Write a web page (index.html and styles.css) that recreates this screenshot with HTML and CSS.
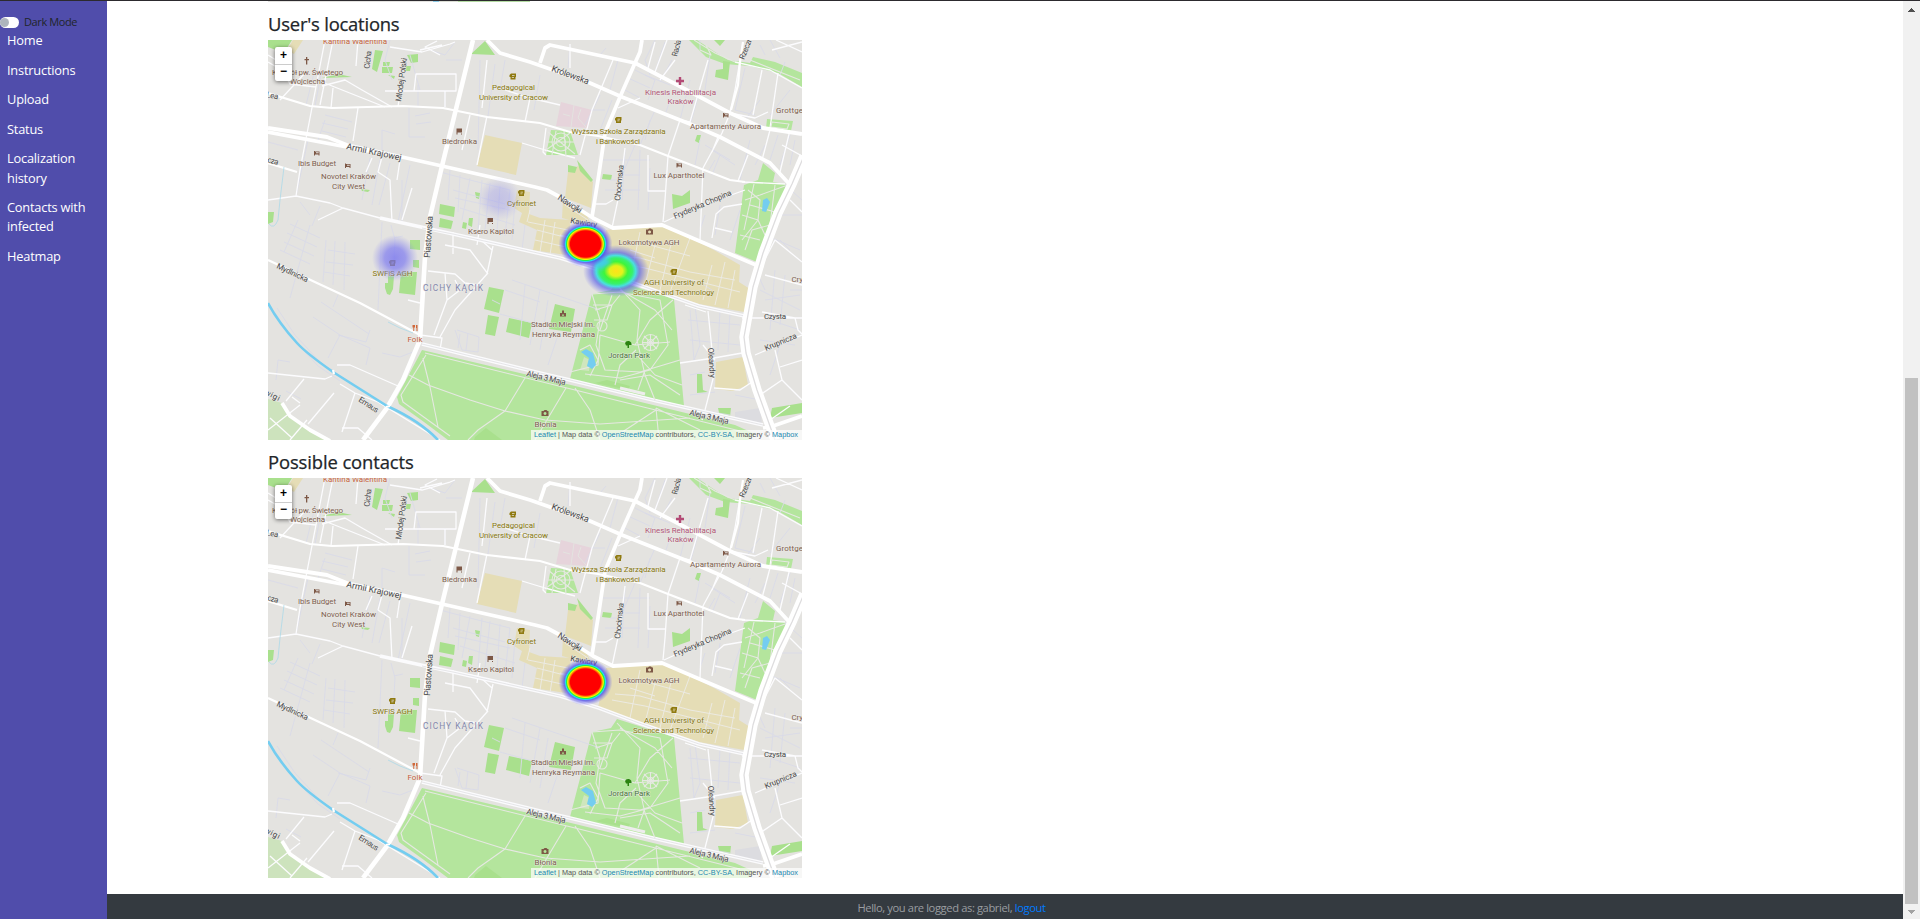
FILE: index.html
```html
<!DOCTYPE html>
<html lang="en">
<head>
<meta charset="utf-8">
<title>Heatmap</title>
<link rel="stylesheet" href="styles.css">
</head>
<body>
<div class="app">
  <nav class="sidebar">
    <div class="switch"><span class="track"><span class="knob"></span></span><span class="switch-label">Dark Mode</span></div>
    <a>Home</a>
    <a>Instructions</a>
    <a>Upload</a>
    <a>Status</a>
    <a>Localization<br>history</a>
    <a>Contacts with<br>infected</a>
    <a>Heatmap</a>
  </nav>
  <div class="page">
    <main class="content">
      <div class="previous-map"></div>
      <h2 class="title">User's locations</h2>
      <div class="map">
        <svg class="tiles" viewBox="268 40 534 400"></svg>
        <svg class="heat" viewBox="268 40 534 400">
          <ellipse cx="499.500" cy="199" rx="22" ry="22" fill="url(#faint)" opacity=".38"/>
          <ellipse cx="395" cy="258" rx="23" ry="23" fill="url(#faint)"/>
          <ellipse cx="616" cy="271" rx="33" ry="26" fill="url(#mid)"/>
          <path d="M593 262L604 257L612 262L600 270Z" fill="#42cbe8" class="bridge"/>
          <ellipse cx="585.500" cy="244" rx="27" ry="23.500" fill="url(#hot)"/>
        </svg>
        <div class="zoom"><span>+</span><span>−</span></div>
        <div class="credit"><a>Leaflet</a> | Map data © <a>OpenStreetMap</a> contributors, <a>CC-BY-SA</a>, Imagery © <a>Mapbox</a></div>
      </div>
      <h2 class="title title-wide">Possible contacts</h2>
      <div class="map">
        <svg class="tiles" viewBox="268 40 534 400"></svg>
        <svg class="heat" viewBox="268 40 534 400">
          <ellipse cx="585.500" cy="244" rx="27" ry="23.500" fill="url(#hot)"/>
        </svg>
        <div class="zoom"><span>+</span><span>−</span></div>
        <div class="credit"><a>Leaflet</a> | Map data © <a>OpenStreetMap</a> contributors, <a>CC-BY-SA</a>, Imagery © <a>Mapbox</a></div>
      </div>
    </main>
    <footer class="footer"><span class="who">Hello, you are logged as: gabriel, <a>logout</a></span></footer>
  </div>
  <div class="scrollbar">
    <svg class="arrow" width="7" height="4" viewBox="0 0 7 4"><path d="M0 4V3H1V2H2V1H3V0H4V1H5V2H6V3H7V4Z" fill="#505050"/></svg>
    <div class="thumb"></div>
    <svg class="arrow" width="7" height="4" viewBox="0 0 7 4"><path d="M0 0V1H1V2H2V3H3V4H4V3H5V2H6V1H7V0Z" fill="#a3a3a3"/></svg>
  </div>
</div>
<svg class="defs" width="0" height="0">
  <defs>
    <radialGradient id="faint"><stop offset="0" stop-color="#7370f0" stop-opacity=".76"/><stop offset=".45" stop-color="#7d7af0" stop-opacity=".7"/><stop offset="1" stop-color="#8a88f0" stop-opacity="0"/></radialGradient>
    <radialGradient id="mid"><stop offset="0" stop-color="#ffe11a"/><stop offset=".2" stop-color="#e2f31c"/><stop offset=".36" stop-color="#3ef53a"/><stop offset=".5" stop-color="#38f070"/><stop offset=".6" stop-color="#42dfe0" stop-opacity=".95"/><stop offset=".72" stop-color="#5b63e8" stop-opacity=".7"/><stop offset="1" stop-color="#6a66f0" stop-opacity="0"/></radialGradient>
    <radialGradient id="hot"><stop offset="0" stop-color="#f00"/><stop offset=".56" stop-color="#f00"/><stop offset=".62" stop-color="#ff9a00"/><stop offset=".66" stop-color="#f4f800"/><stop offset=".7" stop-color="#1cf53c"/><stop offset=".74" stop-color="#22dff5"/><stop offset=".79" stop-color="#4b47ec" stop-opacity=".75"/><stop offset="1" stop-color="#6a66f0" stop-opacity="0"/></radialGradient>
  </defs>
</svg>
<template id="city">
  <svg>
  <rect x="268" y="40" width="534" height="400" fill="#e4e3e0"/>
  <g fill="#e5ddb6">
    <path d="M293 40H303L294 54L287 50ZM485 135L522 143L516 175L477 166ZM517 190L530 192L529 214L540 218L571 220L566 255L533 250L537 230L519 222L522 213L514 208ZM568 172L578 166L593 182L591 208L565 198ZM563 199L586 214L592 226L562 218ZM606 230L664 225L714 250L740 265L739 282L750 289L744 312L699 304L639 284L598 270ZM716 362L743 357L748 385L733 391L715 389Z"/>
  </g>
  <path d="M561 102L592 110L588 128L556 126Z" fill="#e6d4db"/>
  <path d="M574 105L571 127M581 109L578 118L586 127M570 116L563 114" stroke="#e4e3e0" stroke-width="1" fill="none"/>
  <path d="M268 399L282 403L290 416L310 430L328 440H268Z" fill="#cde3bd"/>
  <g fill="#b4e59d">
    <path d="M592 294L611 290L617 281L674 299L684 406L570 379ZM422 350L571 385L735 425L755 434L748 440H448L424 422L399 404L397 397ZM763 163L775 173L773 182L785 184L786 190L770 225L757 262L735 253L744 185L758 180ZM551 130L570 131L578 155L546 155ZM689 40H697L715 52L728 60L750 63L753 57L775 62L802 73V87L778 73L750 66L725 64L706 57ZM767 119L793 121L791 131L766 128Z"/>
  </g>
  <g fill="#a9e08d">
    <path d="M268 40H292L284 53L268 47ZM375 50L383 51L377 72L372 69ZM407 55L418 54V62L411 63ZM383 62H390L389 66H383ZM382 67H393L392 73H382ZM388 75L395 76L394 79ZM406 66H411L410 71H405ZM322 78L352 77L338 74ZM471 54L485 41L495 55ZM440 204L455 207L454 217L439 214ZM440 218L453 221L451 229L439 227ZM475 192L480 193L479 199L476 198ZM469 218H473L472 227L468 225ZM463 222L467 223L466 229L462 228ZM410 240H420V250L410 249ZM413 260H419V268L413 267ZM401 272H417L415 295L399 293ZM388 276H394L393 289L390 295L387 294L385 288V283H388ZM489 287L504 290L499 313L484 309ZM488 315L499 317L495 336L485 334ZM509 318L532 323L529 338L506 332ZM555 304L575 309L571 332L549 329ZM268 212H274L273 222L268 224ZM361 189L370 190L368 192L362 191ZM568 165L577 167L575 173L568 172ZM577 160L593 180L591 182L580 171ZM603 174L612 175L611 180L602 179ZM672 194L682 196L690 190V203L673 209ZM697 135H701L699 143L695 141ZM714 40H725L720 46ZM716 70L723 69V61L730 62L728 80L715 77ZM772 408L802 403V413L770 418ZM697 374H702L703 390L708 392L697 393ZM718 408H731L730 417H720ZM595 383L607 380L630 386L628 390ZM475 437L486 428L502 440H474Z"/>
  </g>
  <path d="M580 370L584 357L590 360L589 371Z" fill="#cfe6bd"/>
  <path d="M735 412L760 408L762 424L735 418Z" fill="#dcdce0"/>
  <g class="path">
    <path d="M314 73L306 105M321 74L315 106M268 142L298 150M308 140L296 196M325 115L352 122M322 123L348 129M322 131L346 137M325 120L318 140M409 108V137H425M415 116L430 113M416 124L431 122M480 60L478 150M495 64L488 116M505 60L500 90M418 85V107M445 90V107M390 40L385 60L392 80M410 55L420 90M430 50L445 55L455 42M446 60H462M370 158L362 200M380 160L372 205M390 163L379 205M402 180V222M410 165L398 222M382 150V130L395 134"/>
    <path d="M290 224L320 238M287 233L317 247M284 242L314 256M280 250L310 264M298 220L284 252M310 225L290 298M326 240L323 282M335 241L333 285M345 242L344 290M328 250L355 254M326 262L353 265M324 272L350 276M391 225L395 240L393 275M394 238L403 236M300 202L310 215M320 206L312 226M382 222L378 310"/>
    <path d="M338 295L333 307M321 302L369 334M313 317L340 335L370 348L366 365M340 335L328 358M370 330L366 342L338 335M382 353L400 357L418 350M277 308L295 335L320 362L338 374M274 311L292 338L318 366L340 381M276 380L278 360L290 362M301 399L286 391M455 330L462 350L478 352L479 337L457 330M460 334L458 348M468 333L466 350M492 300L500 304M500 314L540 325M505 290L540 302M525 285L520 340M540 290L530 345M548 300L540 350M558 335L548 365M512 280L600 310"/>
    <path d="M440 172L470 180L510 190M450 170L448 200M460 175L458 212M470 178L462 220M482 180L478 230M490 183L485 230M500 186L497 232M510 190L505 236M453 190L505 204M455 198L510 210M460 208L515 225M440 170L436 200M515 200L512 240M525 225L522 250"/>
    <path d="M540 75L534 110M570 45L568 68M606 48L600 55M618 60L610 90M655 40L645 60L650 75M665 42L655 72M672 60L660 82M635 70L655 80L648 100M628 78L650 88M625 90L640 98M645 75L670 85M600 95L585 125M590 110H605M612 100L600 130M650 120L645 140M655 110L640 145M690 80L680 120M700 90L690 125M670 100L665 115M700 140L695 165M705 145L730 160M712 150L735 165M715 160L708 172M720 155L712 175M650 168L648 210M635 145L620 180H610M625 150L622 200M640 150L638 210M600 160H650M605 190H640M625 175H640"/>
    <path d="M704 285L712 290M690 310L694 360M695 306L700 345L694 360M720 310L718 350M730 312L728 352M688 320L740 325M690 340L740 345M760 290L800 310M765 300L800 295M775 270L770 330M785 275L780 325M790 290H802M770 320L800 330M760 340L795 345M780 345L770 375M690 375L705 372M690 395L715 392M735 395L760 400M700 410L730 415M758 275L765 290"/>
    <path d="M700 40V50M710 55L705 90M745 68L735 110M760 45L765 55M770 40L780 58M785 62L780 75M790 90L770 115M735 110L755 115M745 120L760 100M778 135L770 160M790 135L780 165M750 140L740 180M765 145L755 165M795 140L790 165M780 240L790 250M775 215H802M765 235L800 250M785 185L802 200M705 215L700 230M720 205L715 235M740 210L730 240"/>
  </g>
  <g class="campus">
    <path d="M530 210L527 222M545 220L540 252M555 222L550 255M537 230L568 238M535 240L566 247M528 222L568 230M640 232L630 280M655 245L645 285M672 240L660 290M690 238L670 292M712 265L703 300M725 262L715 305M735 270L728 308M615 256L640 258L690 272L735 280M612 262L645 268L740 292M650 245L690 256M630 250L655 258M565 205L588 220M560 235L572 238"/>
  </g>
  <g class="minor">
    <path d="M268 55L276 60M268 62L282 70L290 84L316 87M325 40L300 170L296 196M333 40L320 105M358 40L356 66M305 73L280 100M322 86L345 80L362 90L392 107M322 82L385 107M385 91L456 91V74H416L414 91M400 92L398 107M440 55L425 47L437 41M420 50L442 45M390 47L422 52L450 44L455 42M333 88L331 108M358 108L353 141M445 91V107M400 160L397 180M470 115L462 150M487 116L477 165M482 108L487 60M525 122L530 98L560 105M530 98L505 90M522 143L545 150L575 158M546 155L543 152L546 128M268 200L296 196L330 203L343 208L380 218M343 208L318 220M382 157L378 172L390 180L392 222M412 188L402 220M372 158L366 172"/>
    <path d="M570 44L570 68M613 60L592 110L580 155M655 42L648 68M640 98L618 108M667 40L655 72M675 60L660 80M708 60L690 122L680 120L668 156M740 60L735 90L730 112M735 62L770 70L802 88M762 70L753 115M778 73L770 128M730 113L722 133L703 168M718 137L712 152M748 155L738 181M770 130L762 160M790 130L780 172M782 145L802 156M800 165L785 205M790 200L802 212M742 182L785 184M668 156L665 200L663 222M648 155V191H666M625 148L620 190L612 228M596 204L606 204L613 200M664 222L690 210L745 190M712 238L716 214L724 207L742 204M715 228L732 232M703 168L700 240M730 113L755 118L768 112M772 50L802 42M776 40L802 52"/>
    <path d="M445 245L470 250L488 274M453 232V254M453 234L480 239L492 250M493 246L487 274L455 310L440 337M428 271L455 274L465 283L478 285M445 273L447 300L434 335M447 300L460 290L455 280M420 335L442 338L440 350M268 373L325 379L332 376M337 365L350 365L398 386M304 379L286 401M334 393L308 424M355 393L342 432M342 428H358L372 440M292 397L300 403M340 384L355 393L378 402L440 440M307 420L290 440M268 430L300 405M270 418L292 438M480 225L477 245M408 300L420 303"/>
    <path d="M708 311L712 350L714 375L705 410L702 420M680 363L714 358L742 353M714 388L740 390L752 382M742 318H802M762 312L795 318L798 330L802 334M755 355L790 340L802 335M775 350L782 380L802 400M780 367L802 360M757 397L782 380M685 305L706 312M765 275L802 285M762 265L775 240L802 262M770 420L790 406M715 360L703 345"/>
  </g>
  <g class="double">
    <path d="M422 344L540 373L570 380L657 401L763 425"/><path d="M380 218L453 234L560 258L599 270L639 285L699 306L749 317"/>
  </g>
  <path class="double-mid" d="M422 344L540 373L570 380L657 401L763 425M422 228L453 234L560 258L599 270L639 285L699 306L749 317"/>
  <g class="trail">
    <path d="M425 353L571 389L740 431M426 355L401 395L403 402L450 436M423 358L424 363L430 387L438 427M409 375L428 385L470 400L505 411L545 420M525 378L505 411L478 430L468 440M575 388L590 410L600 440M566 388L535 440M656 408L659 440M545 420L600 424L690 418M656 410L610 440M656 408L700 430"/>
    <path d="M592 294L620 292L660 300L668 345L650 370L620 378L585 374M617 285L640 310L637 340L645 375L655 400M595 310L612 305L620 295M673 300L650 320L635 345L600 335M600 335L598 365L570 372M592 294L600 320L596 345L605 370L640 372L680 360M612 295L600 330M635 345L670 342M636 350L620 365L615 385M637 355L655 375L682 385M580 350L590 345L598 360L590 376M620 380L650 375L680 395M645 370L638 390M593 305H612L607 320H594M620 290L655 310L672 330"/>
    <circle cx="650.500" cy="342.500" r="8"/><circle cx="650.500" cy="342.500" r="3"/><path d="M642 342.500H659M650.500 334V351M644 336L657 349M657 336L644 349"/><circle cx="602" cy="326" r="5"/>
    <path d="M548 132L575 154M546 150L570 133M556 131L552 155M564 131L566 156M546 142H574"/><circle cx="561" cy="142" r="9"/><circle cx="561" cy="142" r="4.500"/>
    <path d="M748 190L760 200L758 220L742 240M785 186L760 195L745 200M775 185L770 225L752 230L745 250M742 215L758 220L765 235M740 235L760 240M754 184L744 230M750 205L775 212M706 45L711 55L700 50M694 40L715 53L735 62M750 60L800 80"/>
    <path d="M772 122L789 124L787 129L771 127Z"/>
  </g>
  <path d="M620 388L645 394" stroke="#eeeded" stroke-width="3" fill="none"/>
  <g class="road">
    <path d="M268 93L310 106L332 108L403 106L443 108L487 117L540 123L570 132L598 136L640 145L668 156L730 180L745 182"/>
    <path d="M268 260L317 283L360 303L420 335"/>
    <path d="M268 163L297 172"/>
    <path d="M743 42L740 62L738 85L731 110"/>
  </g>
  <g class="main">
    <path d="M487 40L500 53L530 62L590 83L622 97L690 124L720 137L770 163L792 187"/>
    <path d="M540 63L545 48L550 45L635 63L683 88L730 113L763 128L802 134"/>
    <path d="M642 40L640 52L635 63L620 97L605 133L598 180L592 217"/>
    <path d="M268 128L327 137L347 145L402 157L442 166L535 187L547 190L560 197L593 218L613 228L662 225L697 240L763 268"/>
    <path d="M268 132L347 147L380 153"/>
    <path d="M282 403L290 416L310 430L330 441"/>
    <path d="M763 428L773 426L802 416"/>
  </g>
  <path class="avenue" d="M473 40L442 166L430 217L425 257L420 340L403 380L387 408L363 440"/>
  <path class="alley" d="M804 156L792 184L778 213L763 253L753 287L744 337L746 353L757 390L775 440"/>
  <path class="alley-mid" d="M804 156L792 184L778 213L763 253L753 287L744 337L746 353L757 390L775 440"/>
  <path class="river" d="M268 303Q278 322 297 343Q306 353 333 372L387 406Q420 421 438 440"/>
  <path d="M581 352L586 349L593 353L596 365L592 369L587 366L589 358L585 355ZM763 200L767 198L770 202L766 212L762 211Z" fill="#74cdf0"/>
  <path d="M284 167L280 200L278 220Q274 230 269 224M388 322L400 328L413 333" fill="none" stroke="#acd9e8" stroke-width=".8"/>
  <path d="M333 370L334 374M386 407L390 406" stroke="#fff" stroke-width="2.200"/>

  <g class="icons">
    <g fill="#8f7a10">
      <path id="cap" fill-rule="evenodd" d="M509.500 75L511 73.500H516V77H515.500V79.500H510.500V77H509.500ZM512 75.200V75.900H514.500V75.200ZM511.800 77V77.700H514V77Z"/>
      <use href="#cap" x="105.500" y="43.500"/><use href="#cap" x="8.500" y="116.500"/><use href="#cap" x="-120.500" y="186.500"/><use href="#cap" x="161" y="195.500"/>
    </g>
    <g fill="#7d5846">
      <path d="M306 57H307.300V59H309V60.200H307.300V64.500H306V60.200H304.500V59H306Z"/>
      <path id="cart" d="M456.500 128.500H462V132.500H457.500V134.500H456.500ZM461 133.500H462V134.500H461Z"/><use href="#cart" x="31" y="89.500"/>
      <path id="bed" fill-rule="evenodd" d="M314 151H315V151.500H319.500V155.500H318.500V154.500H315V155.500H314ZM316 152.300V153.300H318.700V152.300Z"/><use href="#bed" x="31" y="12.500"/><use href="#bed" x="409" y="-38"/><use href="#bed" x="362.500" y="12"/>
      <path id="cam" fill-rule="evenodd" d="M646 229.500H648L649 228.500H651L652 229.500H653V234.500H646ZM649.500 230.500A1.500 1.500 0 1 0 649.600 230.500Z"/><use href="#cam" x="-104.500" y="181.500"/>
      <path fill-rule="evenodd" d="M560 313H562V310.500H564V313H566V316.500H560ZM562 314.500V315.700H564V314.500Z"/>
    </g>
    <path d="M678.800 77H681.200V79.800H684V82.200H681.200V85H678.800V82.200H676V79.800H678.800Z" fill="#b34a75"/>
    <path d="M412.500 325V327.500H413.300V331H414.200V327.500H415V325M416 325H417.500V331H416.500V328H416Z" fill="#d0683a"/>
    <path d="M625 343Q626 340.500 629 341Q632 342 631.500 345H629V348H627.500V345.500H626Z" fill="#2b8310"/>
  </g>
  <g class="labels">
    <g fill="#c4623c"><text x="323" y="43.500" textLength="64">Kantina Walentina</text><text x="407.500" y="342" textLength="15">Folk</text></g>
    <g fill="#7d6050">
      <text x="272" y="74.500" textLength="71">Kościół pw. Świętego</text><text x="290" y="84" textLength="35">Wojciecha</text>
      <text x="442" y="144" textLength="35">Biedronka</text><text x="298" y="166" textLength="38">Ibis Budget</text>
      <text x="321" y="179" textLength="55">Novotel Kraków</text><text x="332" y="188.500" textLength="33">City West</text>
      <text x="468" y="234" textLength="46">Ksero Kapitol</text>
      <text x="690" y="128.500" textLength="71">Apartamenty Aurora</text><text x="776" y="113" textLength="34">Grottgera</text>
      <text x="653.500" y="178" textLength="51">Lux Aparthotel</text><text x="618.500" y="244.500" textLength="61">Lokomotywa AGH</text>
      <text x="531" y="327" textLength="64">Stadion Miejski im.</text><text x="532" y="336.500" textLength="63">Henryka Reymana</text>
      <text x="534.500" y="426.500" textLength="22">Błonia</text><text x="791.500" y="281.500" textLength="24">Crystal</text>
    </g>
    <g fill="#87770f">
      <text x="492" y="90" textLength="43">Pedagogical</text><text x="479" y="99.500" textLength="69">University of Cracow</text>
      <text x="571.500" y="134" textLength="94">Wyższa Szkoła Zarządzania</text><text x="596" y="143.500" textLength="44">i Bankowości</text>
      <text x="507" y="206" textLength="29">Cyfronet</text><text x="372.500" y="276" textLength="40">SWFiS AGH</text>
      <text x="644" y="285" textLength="60">AGH University of</text><text x="633" y="294.500" textLength="81">Science and Technology</text>
    </g>
    <g fill="#b05678"><text x="645" y="94.500" textLength="71">Kinesis Rehabilitacja</text><text x="667.500" y="104" textLength="26">Kraków</text></g>
    <text x="608" y="358" textLength="42" fill="#4a743c">Jordan Park</text>
    <text x="423" y="291" textLength="60" fill="#8488ae" class="district">CICHY KĄCIK</text>
    <g fill="#48484a">
      <text transform="translate(369.500 69) rotate(-84)" textLength="18">Cicha</text>
      <text transform="translate(401 102) rotate(-82)" textLength="44">Młodej Polski</text>
      <text transform="translate(266 97) rotate(12)" textLength="12">Lea</text>
      <text class="street" transform="translate(346 149) rotate(12)" textLength="56">Armii Krajowej</text>
      <text transform="translate(267 162) rotate(16)" textLength="11">cza</text>
      <text class="street" transform="translate(551 71) rotate(20)" textLength="39">Królewska</text>
      <text transform="translate(677 57) rotate(-76)" textLength="34">Racławicka</text>
      <text transform="translate(744 60) rotate(-68)" textLength="27">Rzeczna</text>
      <text transform="translate(620 201) rotate(-84)" textLength="36">Chocimska</text>
      <text class="street" transform="translate(557 199) rotate(33)" textLength="27">Nawojki</text>
      <text transform="translate(570 223) rotate(10)" textLength="27">Kawiory</text>
      <text transform="translate(675 219) rotate(-23)" textLength="62">Fryderyka Chopina</text>
      <text class="street" transform="translate(430 258) rotate(-86)" textLength="42">Piastowska</text>
      <text transform="translate(276 268) rotate(25)" textLength="34">Mydlnicka</text>
      <text transform="translate(358 401) rotate(33)" textLength="22">Emaus</text>
      <text transform="translate(264 394) rotate(26)" textLength="16">wigi</text>
      <text transform="translate(526 376) rotate(13)" textLength="40">Aleja 3 Maja</text>
      <text transform="translate(689 415) rotate(13)" textLength="40">Aleja 3 Maja</text>
      <text x="764" y="319" textLength="22">Czysta</text>
      <text transform="translate(766 351) rotate(-23)" textLength="34">Krupnicza</text>
      <text transform="translate(708 348) rotate(86)" textLength="30">Oleandry</text>
    </g>
  </g>
  </svg>
</template>
<script src="map.js"></script>
</body>
</html>
```
FILE: styles.css
```css
* { box-sizing: border-box; }
body { margin: 0; overflow: hidden; font-family: "Open Sans", "Noto Sans", sans-serif; color: #212529; background: #fff; }
.app { display: flex; height: 919px; border-top: 1px solid #2c2a2e; }
.sidebar { width: 107px; background: #504dab; padding-top: 11px; flex: none; }
.switch { display: flex; align-items: center; height: 20px; gap: 5px; font-size: 11px; }
.track { width: 19px; height: 11px; border-radius: 6px; background: #fff; display: flex; align-items: center; }
.knob { width: 9px; height: 9px; border-radius: 50%; background: #adb5bd; }
.switch-label { color: #212529; letter-spacing: -.4px; padding-bottom: 2px; }
.sidebar a { display: block; color: #fff; font-size: 12.800px; font-weight: 500; line-height: 19.200px; padding: 0 0 0 7px; margin-bottom: 10.400px; letter-spacing: -.2px; white-space: nowrap; }
.switch + a { margin-top: -1px; }
.page { flex: 1; display: flex; flex-direction: column; }
.content { flex: 1; padding-left: 161px; }
.previous-map { width: 262px; height: 1px; background: linear-gradient(90deg, #e4e3e0 0 165px, #8cc8e4 165px 171px, #dcded5 171px 190px, #b4dba3 190px); }
.title { margin: 0; font-size: 18.400px; font-weight: 500; line-height: 22px; height: 38px; padding-top: 11px; letter-spacing: -.2px; white-space: nowrap; -webkit-text-stroke: .25px #212529; }
.title-wide { letter-spacing: -.1px; }
.map { position: relative; width: 534px; height: 400px; overflow: hidden; background: #e4e3e0; }
.tiles, .heat { position: absolute; inset: 0; width: 534px; height: 400px; }
.bridge { filter: blur(2px); }
.defs { position: absolute; }
.zoom { position: absolute; left: 7px; top: 7px; width: 17px; height: 34px; border-radius: 2px; background: #fff; box-shadow: 0 1px 4px rgba(0,0,0,.55); font: bold 12px/16px "Liberation Sans", sans-serif; color: #000; text-align: center; }
.zoom span { display: block; height: 17px; }
.zoom span + span { border-top: 1px solid #ccc; line-height: 13px; }
.credit { position: absolute; right: 0; bottom: 0; height: 10px; padding: 0 4px 0 3px; background: rgba(255,255,255,.7); font: 7.320px/10px "Liberation Sans", sans-serif; color: #555; white-space: nowrap; }
.credit a { color: #2187b0; }
.footer { height: 25px; background: #343a40; color: #9a9da0; text-align: center; font-size: 11.200px; line-height: 28px; padding-right: 107px; }
.who { letter-spacing: -.4px; }
.footer a { color: #007bff; }
.scrollbar { width: 17px; background: #f1f1f1; display: flex; flex-direction: column; align-items: center; justify-content: space-between; padding: 7px 0 5px; }
.thumb { width: 13px; height: 526px; background: #c1c1c1; margin-top: 366px; margin-bottom: 6px; }
.arrow { display: block; flex: none; }

.tiles path, .tiles circle { stroke-linejoin: round; }
.path { fill: none; stroke: #d9dae8; stroke-width: .9; }
.campus { fill: none; stroke: #ecebe6; stroke-width: .9; }
.minor { fill: none; stroke: #fcfcfe; stroke-width: 1.300; }
.trail { fill: none; stroke: #e6e8e2; stroke-width: 1.100; }
.road { fill: none; stroke: #fff; stroke-width: 2.200; }
.main { fill: none; stroke: #fff; stroke-width: 3.800; }
.avenue { fill: none; stroke: #fff; stroke-width: 4.600; }
.double { fill: none; stroke: #fbfbfd; stroke-width: 3.800; }
.double-mid { fill: none; stroke: #dfdfe2; stroke-width: .8; }
.alley { fill: none; stroke: #fff; stroke-width: 9.400; }
.alley-mid { fill: none; stroke: #deddde; stroke-width: 1.300; }
.river { fill: none; stroke: #74cdf0; stroke-width: 2.600; }
.labels { font-family: Roboto, "Open Sans", sans-serif; font-size: 8px; }
.labels .street { font-size: 8.800px; }
.labels .district { font-size: 8.400px; }
.labels text { paint-order: stroke; stroke: rgba(236,235,231,.7); stroke-width: 1.200px; stroke-linejoin: round; }
```
FILE: map.js
```js
// Both maps show the same city view, so the drawing is kept once in a template.
const city = document.getElementById('city').content.firstElementChild;
document.querySelectorAll('.tiles').forEach((layer) => {
  Array.from(city.children).forEach((node) => layer.appendChild(node.cloneNode(true)));
});
```
